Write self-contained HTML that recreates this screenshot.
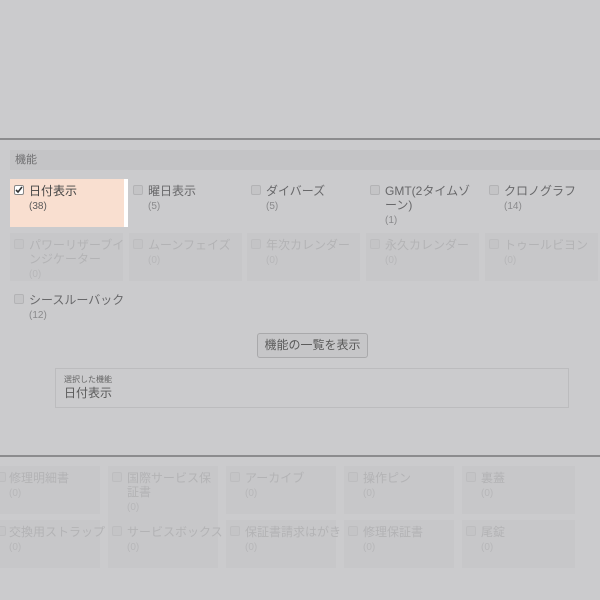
<!DOCTYPE html>
<html><head><meta charset="utf-8"><style>
*{margin:0;padding:0;box-sizing:border-box}
body{width:600px;height:600px;background:#cbcbcd;position:relative;overflow:hidden;font-family:"Liberation Sans","Noto Sans CJK JP",sans-serif;color:#68686a}
.a{position:absolute}
.line{position:absolute;left:0;width:600px;height:2px;background:#8c8c8e}
.cell{position:absolute;font-size:12px;line-height:14px}
.cb{position:absolute;left:4px;top:6px;width:10px;height:10px;border:1px solid #b3b3b5;background:#c4c4c6;border-radius:2px}
.t{position:absolute;left:19px;top:5px;width:100px}
.n{color:#8a8a8c;font-size:10px;display:block;margin-top:2px}
.dis{background:#c7c7c9;color:#b3b3b5}
.dis .n{color:#b7b7b9}
.dis .cb{border-color:#bdbdbf}
</style></head><body>
<div class="line" style="top:138px"></div>
<div class="a" style="left:10px;top:150px;width:590px;height:20px;background:#c4c4c6;font-size:11px;line-height:20px;padding-left:5px;color:#707072">機能</div>

<div class="cell" style="left:10px;top:179px;width:114px;height:48px;background:#f9dfd0;color:#444"><div class="cb" style="background:#fff;border-color:#888"><svg width="8" height="8" viewBox="0 0 8 8" style="position:absolute;left:0;top:0"><path d="M1 4l2 2 4-5" stroke="#333" stroke-width="1.6" fill="none"/></svg></div><div class="t">日付表示<span class="n" style="color:#5a5a5a">(38)</span></div></div>
<div class="a" style="left:124px;top:179px;width:4px;height:48px;background:#fff"></div>
<div class="cell" style="left:129px;top:179px;width:116px;height:48px"><div class="cb"></div><div class="t">曜日表示<span class="n">(5)</span></div></div>
<div class="cell" style="left:247px;top:179px;width:116px;height:48px"><div class="cb"></div><div class="t">ダイバーズ<span class="n">(5)</span></div></div>
<div class="cell" style="left:366px;top:179px;width:116px;height:48px"><div class="cb"></div><div class="t" style="width:90px">GMT(2タイムゾーン)<span class="n">(1)</span></div></div>
<div class="cell" style="left:485px;top:179px;width:116px;height:48px"><div class="cb"></div><div class="t">クロノグラフ<span class="n">(14)</span></div></div>

<div class="cell dis" style="left:10px;top:233px;width:113px;height:48px"><div class="cb"></div><div class="t" style="width:100px">パワーリザーブインジケーター<span class="n">(0)</span></div></div>
<div class="cell dis" style="left:129px;top:233px;width:113px;height:48px"><div class="cb"></div><div class="t">ムーンフェイズ<span class="n">(0)</span></div></div>
<div class="cell dis" style="left:247px;top:233px;width:113px;height:48px"><div class="cb"></div><div class="t">年次カレンダー<span class="n">(0)</span></div></div>
<div class="cell dis" style="left:366px;top:233px;width:113px;height:48px"><div class="cb"></div><div class="t">永久カレンダー<span class="n">(0)</span></div></div>
<div class="cell dis" style="left:485px;top:233px;width:113px;height:48px"><div class="cb"></div><div class="t">トゥールビヨン<span class="n">(0)</span></div></div>

<div class="cell" style="left:10px;top:288px;width:116px;height:40px"><div class="cb"></div><div class="t">シースルーバック<span class="n">(12)</span></div></div>

<div class="a" style="left:257px;top:333px;width:111px;height:25px;border:1px solid #a9a9ab;border-radius:3px;background:#c6c6c8;font-size:12px;line-height:23px;text-align:center;color:#5a5a5a">機能の一覧を表示</div>
<div class="a" style="left:55px;top:368px;width:514px;height:40px;border:1px solid #bcbcbe;padding:6px 0 0 8px"><div style="font-size:8px;line-height:10px;color:#666">選択した機能</div><div style="font-size:12px;line-height:16px;color:#5a5a5a">日付表示</div></div>

<div class="line" style="top:455px"></div>
<div class="cell dis" style="left:-10px;top:466px;width:110px;height:48px"><div class="cb" style="left:6px"></div><div class="t">修理明細書<span class="n">(0)</span></div></div>
<div class="cell dis" style="left:108px;top:466px;width:110px;height:58px"><div class="cb"></div><div class="t" style="width:92px">国際サービス保証書<span class="n">(0)</span></div></div>
<div class="cell dis" style="left:226px;top:466px;width:110px;height:48px"><div class="cb"></div><div class="t">アーカイブ<span class="n">(0)</span></div></div>
<div class="cell dis" style="left:344px;top:466px;width:110px;height:48px"><div class="cb"></div><div class="t">操作ピン<span class="n">(0)</span></div></div>
<div class="cell dis" style="left:462px;top:466px;width:113px;height:48px"><div class="cb"></div><div class="t">裏蓋<span class="n">(0)</span></div></div>

<div class="cell dis" style="left:-10px;top:520px;width:110px;height:48px"><div class="cb" style="left:6px"></div><div class="t">交換用ストラップ<span class="n">(0)</span></div></div>
<div class="cell dis" style="left:108px;top:520px;width:110px;height:48px"><div class="cb"></div><div class="t">サービスボックス<span class="n">(0)</span></div></div>
<div class="cell dis" style="left:226px;top:520px;width:110px;height:48px"><div class="cb"></div><div class="t">保証書請求はがき<span class="n">(0)</span></div></div>
<div class="cell dis" style="left:344px;top:520px;width:110px;height:48px"><div class="cb"></div><div class="t">修理保証書<span class="n">(0)</span></div></div>
<div class="cell dis" style="left:462px;top:520px;width:113px;height:48px"><div class="cb"></div><div class="t">尾錠<span class="n">(0)</span></div></div>
</body></html>
